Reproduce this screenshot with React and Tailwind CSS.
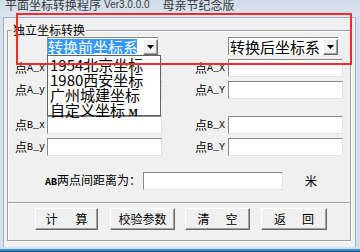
const fieldCls =
  "h-[18px] bg-white border border-t-[#8a8a8a] border-l-[#8a8a8a] border-r-[#e3e3e3] border-b-[#e3e3e3]";

const btnCls =
  "h-[22px] flex items-center justify-center bg-[#f0f0f0] border border-t-white border-l-white border-r-[#696969] border-b-[#696969] shadow-[inset_-1px_-1px_0_#a0a0a0] text-[12px] leading-none text-black";

function Label({ text, className = "" }) {
  // "点" in the CJK face, the rest in a Courier-width mono
  return (
    <div className={`flex items-end leading-none text-black whitespace-nowrap ${className}`}>
      <span className="text-[12px]">{text[0]}</span>
      <span className="font-['Liberation_Mono',monospace] text-[10px]">{text.slice(1)}</span>
    </div>
  );
}

function PointRow({ left, right, className = "" }) {
  return (
    <div className={`flex items-center ${className}`}>
      <Label className="ml-[7px] w-[32px]" text={left} />
      <div className={`${fieldCls} w-[115px]`} />
      <Label className="ml-[33px] w-[33px]" text={right} />
      <div className={`${fieldCls} w-[115px]`} />
    </div>
  );
}

function Arrow() {
  return (
    <div className="w-[15px] h-[16px] flex items-center justify-center bg-[#f0f0f0] border border-t-white border-l-white border-r-[#696969] border-b-[#696969] shadow-[inset_-1px_-1px_0_#a0a0a0]">
      <svg width="7" height="4" viewBox="0 0 7 4">
        <path d="M0 0h7L3.5 4z" fill="#000" />
      </svg>
    </div>
  );
}

export default function App() {
  return (
    <div className="relative w-[360px] h-[252px] overflow-hidden flex flex-col bg-[#d5e0ec] font-['Noto_Sans_CJK_SC',sans-serif]">
      {/* title bar, cut at the top */}
      <div className="h-[17px] flex items-start pl-[5px] text-[12px] leading-[12px] text-[#3a3a3a] bg-gradient-to-b from-[#d0dcea] to-[#dde6f1] whitespace-nowrap">
        <span className="-mt-[1px]">平面坐标转换程序</span>
        <span className="-mt-[1px] ml-[3px] text-[10px] font-['Liberation_Sans',sans-serif]">Ver3.0.0.0</span>
        <span className="-mt-[1px] ml-[13px]">母亲节纪念版</span>
      </div>

      <div className="flex-1 flex">
        <div className="w-[3px]" />
        <div className="flex-1 bg-[#f0f0f0] border-l border-t border-r border-[#9fb2c6] pl-[3px] pr-[3px] pt-[12px]">
          {/* group box */}
          <div className="w-[344px] h-[173px] border border-[#a0a0a0] shadow-[inset_1px_1px_0_#fff,1px_1px_0_#fff]">
            <div className="-mt-[7px] ml-[4px] w-fit px-[1px] bg-[#f0f0f0] text-[12px] leading-[12px] text-black">
              独立坐标转换
            </div>

            <div className="mt-[1px] flex">
              <div className="ml-[39px] w-[111px] h-[18px] flex items-center bg-white border-t border-l border-[#8a8a8a]">
                <div className="w-[89px] h-[15px] bg-[#3399ff] text-white text-[15px] leading-[15px] whitespace-nowrap">
                  转换前坐标系
                </div>
                <div className="ml-auto">
                  <Arrow />
                </div>
              </div>
              <div className="ml-[70px] w-[110px] h-[18px] flex items-center bg-white border-t border-l border-[#8a8a8a]">
                <div className="ml-[1px] text-[15px] leading-[15px] text-black whitespace-nowrap">转换后坐标系</div>
                <div className="ml-auto">
                  <Arrow />
                </div>
              </div>
            </div>

            <PointRow className="mt-[4px]" left="点A_x" right="点A_X" />
            <PointRow className="mt-[4px]" left="点A_y" right="点A_Y" />
            <PointRow className="mt-[17px]" left="点B_x" right="点B_X" />
            <PointRow className="mt-[4px]" left="点B_y" right="点B_Y" />

            <div className="mt-[16px] flex items-center">
              <div className="ml-[37px] w-[98px] text-[12px] leading-none text-black whitespace-nowrap">
                <span className="font-['Liberation_Mono',monospace] text-[10px] font-bold">AB</span>两点间距离为：
              </div>
              <div className={`${fieldCls} w-[140px]`} />
              <div className="ml-[22px] text-[12px] leading-none text-black">米</div>
            </div>
          </div>

          {/* button panel */}
          <div className="w-[344px] h-[38px] border-x border-b border-[#a0a0a0] shadow-[inset_1px_0_0_#fff,1px_1px_0_#fff] pt-[5px] flex items-start">
            <button className={`${btnCls} ml-[27px] w-[63px] gap-[18px]`}>
              <span>计</span>
              <span>算</span>
            </button>
            <button className={`${btnCls} ml-[12px] w-[65px]`}>校验参数</button>
            <button className={`${btnCls} ml-[10px] w-[65px] gap-[16px]`}>
              <span>清</span>
              <span>空</span>
            </button>
            <button className={`${btnCls} ml-[11px] w-[66px] gap-[16px]`}>
              <span>返</span>
              <span>回</span>
            </button>
          </div>
        </div>
        <div className="w-[4px]" />
      </div>

      {/* bottom frame */}
      <div className="h-[5px] flex flex-col">
        <div className="h-[2px] bg-[#d5e0ec]" />
        <div className="h-[2px] bg-[#2d8fd5]" />
        <div className="h-[1px] bg-[#1b4f78]" />
      </div>

      {/* open dropdown list of the first combo */}
      <div className="absolute left-[47px] top-[55px] w-[114px] h-[61px] bg-white border border-[#646464] pl-[2px] pt-[1px] text-[15px] leading-[15px] text-black whitespace-nowrap">
        <div>1954北京坐标</div>
        <div>1980西安坐标</div>
        <div>广州城建坐标</div>
        <div>
          自定义坐标 <span className="font-['Liberation_Serif',serif] font-bold text-[10px]">M</span>
        </div>
      </div>

      {/* red annotation frame */}
      <div className="absolute left-[16px] top-[13px] w-[336px] h-[52px] border-2 border-[#f52a2a]" />
    </div>
  );
}
